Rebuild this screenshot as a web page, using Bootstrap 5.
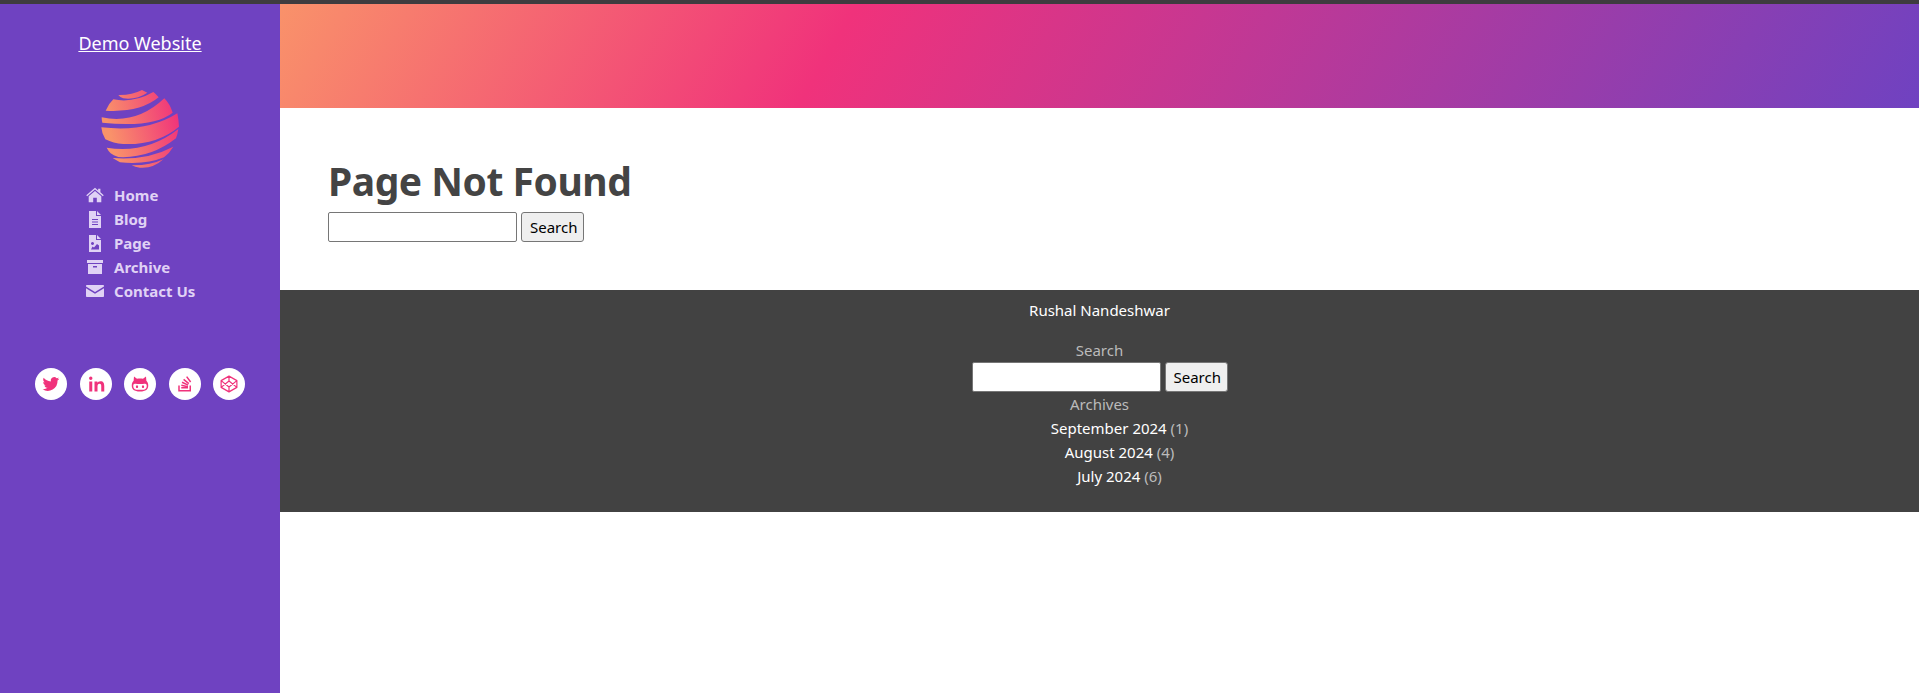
<!DOCTYPE html>
<html lang="en"><head><meta charset="utf-8"><title>Page Not Found</title>
<link href="https://cdn.jsdelivr.net/npm/bootstrap@5.3.0/dist/css/bootstrap.min.css" rel="stylesheet">
<style>
html,body{height:100%}
body{font-family:"Noto Sans","Open Sans",sans-serif;font-size:15px;line-height:24px;color:#444;border-top:4px solid #3e3c3f;background:#fff;min-height:693px}
.side{width:280px;background:#6f42c1;height:689px}
.brand{font-size:18px;line-height:24px;color:#fff;text-decoration:underline;margin-top:27px}
.globe{width:100px;height:95px;margin-top:25px;display:block}
.menu-list{margin-top:8px;width:280px;padding-left:86px}
.menu-list a{display:flex;align-items:center;height:24px;color:#e0d2f5;font-weight:700;font-size:15px;text-decoration:none}
.menu-list svg{width:18px;height:18px;margin-right:10px;fill:#e0d2f5}
.soc{margin-top:65px;gap:12.5px}
.soc a{width:32px;height:32px;background:#fff;border-radius:50%}
.soc svg{width:18px;height:18px}
.hero{height:104px;background:linear-gradient(120deg,#f9926a 0%,#f0327b 34%,#6f42c1 100%)}
.main-area{padding:49px 48px 0;height:182px}
.main-area h1{font-size:39px;letter-spacing:-.47px;line-height:48px;font-weight:700;color:#444;margin:0 0 7px}
.fld{width:189px;height:30px;border:1px solid #767676;border-radius:2px;background:#fff;padding:1px 2px}
.srch{height:30px;border:1px solid #767676;border-radius:3px;background:#efefef;color:#000;font-size:15px;line-height:20px;padding:0 8px;width:63px;margin-left:4px}
.foot{height:222px;background:#424242;color:#fff;text-align:center;padding-top:8px}
.foot .who{height:24px}
.foot .lbl{color:#bbb;height:24px}
.foot .who+.lbl{margin-top:16px}
.foot a{color:#fff;text-decoration:none}
.foot .cnt{color:#bbb}
.foot form{height:30px;margin-bottom:0}
.arc-list{list-style:none;margin:0;padding:0 0 0 40px}
.arc-list li{height:24px}
</style></head>
<body>
<div class="d-flex">
<aside class="side d-flex flex-column align-items-center flex-shrink-0">
<a class="brand" href="#">Demo Website</a>
<svg class="globe" viewBox="0 0 300 285"><defs><linearGradient id="g" gradientUnits="userSpaceOnUse" x1="60" x2="268" y1="160" y2="110"><stop offset="0" stop-color="#f9926a"/><stop offset="1" stop-color="#f0327b"/></linearGradient></defs>
<g fill="url(#g)">
<path d="M85 45Q125 46 156 30L172 38Q140 60 100 55Q90 52 85 45Z"/>
<path d="M47 92Q55 72 70 58Q130 70 190 36Q198 42 206 52Q150 98 47 92Z"/>
<path d="M35 112Q140 134 223 55Q240 72 248 98Q190 144 37 128Q35 120 35 112Z"/>
<path d="M34 142Q170 158 262 100Q266 120 267 140Q200 196 100 192Q70 190 46 178Q35 160 34 142Z"/>
<path d="M50 203Q170 222 265 147Q263 162 258 175Q180 236 85 231Q70 226 62 220Q55 213 50 203Z"/>
<path d="M68 234Q170 242 250 200Q238 220 222 232Q170 254 90 247Q78 240 68 234Z"/>
<path d="M125 256Q180 257 220 238Q190 266 150 263Q135 261 125 256Z"/>
</g></svg>
<nav class="menu-list">
<a href="#"><svg viewBox="0 0 20 18"><path d="M10 1 .3 9.3l1 1.1L10 3l8.700 7.400 1-1.100L16 6V2h-2.500v1.900ZM10 4.500 3 10.500V17h5v-5h4v5h5v-6.500Z"/></svg>Home</a>
<a href="#"><svg viewBox="0 0 18 18"><path fill-rule="evenodd" d="M3 1h7v5h5v12H3ZM11 1l4 4h-4ZM6 9v1h6V9Zm0 2.500v1h6v-1Zm0 2.500v1h6v-1Z"/></svg>Blog</a>
<a href="#"><svg viewBox="0 0 18 18"><path fill-rule="evenodd" d="M3 1h7v5h5v12H3ZM11 1l4 4h-4ZM6.500 8a1.500 1.500 0 1 0 .01 0ZM5 15.500h8v-4l-2-1.500L8 13.500 6.500 12.500Z"/></svg>Page</a>
<a href="#"><svg viewBox="0 0 18 18"><path fill-rule="evenodd" d="M1 2h16v3H1ZM2 6h14v10H2ZM7 8v1.500h4V8Z"/></svg>Archive</a>
<a href="#"><svg viewBox="0 0 18 18"><path d="M1 3h16c.5 0 1 .4 1 1v.6L9 10 0 4.600V4c0-.6.500-1 1-1ZM0 6.300 9 11.800l9-5.500V14c0 .6-.5 1-1 1H1c-.5 0-1-.4-1-1Z"/></svg>Contact Us</a>
</nav>
<div class="soc d-flex">
<a class="d-flex align-items-center justify-content-center" href="#" aria-label="Twitter"><svg viewBox="0 0 24 24" fill="#f0327b"><path d="M23 5c-.8.4-1.700.6-2.600.7.900-.6 1.600-1.400 2-2.500-.9.500-1.900.9-2.900 1.100A4.600 4.600 0 0 0 11.700 8.500C7.900 8.300 4.500 6.500 2.200 3.700c-1.200 2.100-.6 4.800 1.400 6.100-.7 0-1.400-.2-2-.6 0 2.200 1.500 4.100 3.700 4.600-.7.200-1.400.2-2.100.1.600 1.900 2.300 3.200 4.300 3.200A9.300 9.300 0 0 1 .7 19a13 13 0 0 0 20-11.600c.9-.7 1.700-1.500 2.300-2.400Z"/></svg></a>
<a class="d-flex align-items-center justify-content-center" href="#" aria-label="LinkedIn"><svg viewBox="0 0 24 24" fill="#f0327b"><path d="M3 8.500h4V22H3ZM5 2a2.300 2.300 0 1 1 0 4.600A2.300 2.300 0 0 1 5 2ZM10 8.500h3.800v1.900c.6-1.100 2-2.200 4.100-2.200 4.200 0 5.100 2.800 5.100 6.400V22h-4v-6.600c0-1.600 0-3.600-2.200-3.600s-2.800 1.700-2.800 3.500V22h-4Z"/></svg></a>
<a class="d-flex align-items-center justify-content-center" href="#" aria-label="GitHub"><svg viewBox="0 0 24 24" fill="#f0327b"><path fill-rule="evenodd" d="M4 2l4 3c2.600-.6 5.400-.6 8 0l4-3 .5 5.500C22 9 23 11 23 14c0 5-3 8-11 8S1 19 1 14c0-3 1-5 2.500-6.500ZM5 11.500c-1.200 0-2 1-2 3S4 19 7 19.500h10c3-.5 4-3 4-5s-1-3-2-3c-2 0-4 .5-7 .5s-5-.5-7-.5ZM8 13.500a1.500 2 0 1 0 .01 0ZM16 13.500a1.500 2 0 1 0 .01 0Z"/></svg></a>
<a class="d-flex align-items-center justify-content-center" href="#" aria-label="Stack Overflow"><svg viewBox="0 0 24 24" fill="#f0327b"><path d="M3 14h2v6h13v-6h2v8H3ZM7 16h9v2H7ZM7.300 12.800l8.800 1.900-.4 1.900-8.800-1.900ZM8.500 8.800l8.100 3.800-.8 1.800-8.200-3.800ZM10.800 5l6.900 5.800-1.300 1.500-6.900-5.800ZM15 1.500l5.300 7.200-1.600 1.200-5.300-7.200Z"/></svg></a>
<a class="d-flex align-items-center justify-content-center" href="#" aria-label="CodePen"><svg viewBox="0 0 24 24" fill="none" stroke="#f0327b" stroke-width="1.600" stroke-linejoin="round"><path d="M12 1.500 22.500 7.500v9L12 22.500 1.500 16.500v-9ZM12 22.500v-6.500M22.500 7.500 12 16 1.500 7.500M1.500 16.500 12 8l10.500 8.500M12 1.500V8"/></svg></a>
</div>
</aside>
<div class="flex-grow-1">
<div class="hero"></div>
<main class="main-area">
<h1>Page Not Found</h1>
<form class="d-flex align-items-center"><input class="fld" type="text" aria-label="Search"><button class="srch" type="button">Search</button></form>
</main>
<footer class="foot">
<div class="who">Rushal Nandeshwar</div>
<div class="lbl">Search</div>
<form class="d-flex align-items-center justify-content-center"><input class="fld" type="text" aria-label="Search"><button class="srch" type="button">Search</button></form>
<div class="lbl">Archives</div>
<ul class="arc-list">
<li><a href="#">September 2024</a> <span class="cnt">(1)</span></li>
<li><a href="#">August 2024</a> <span class="cnt">(4)</span></li>
<li><a href="#">July 2024</a> <span class="cnt">(6)</span></li>
</ul>
</footer>
</div>
</div>
<script src="https://cdn.jsdelivr.net/npm/bootstrap@5.3.0/dist/js/bootstrap.bundle.min.js"></script>
</body></html>
